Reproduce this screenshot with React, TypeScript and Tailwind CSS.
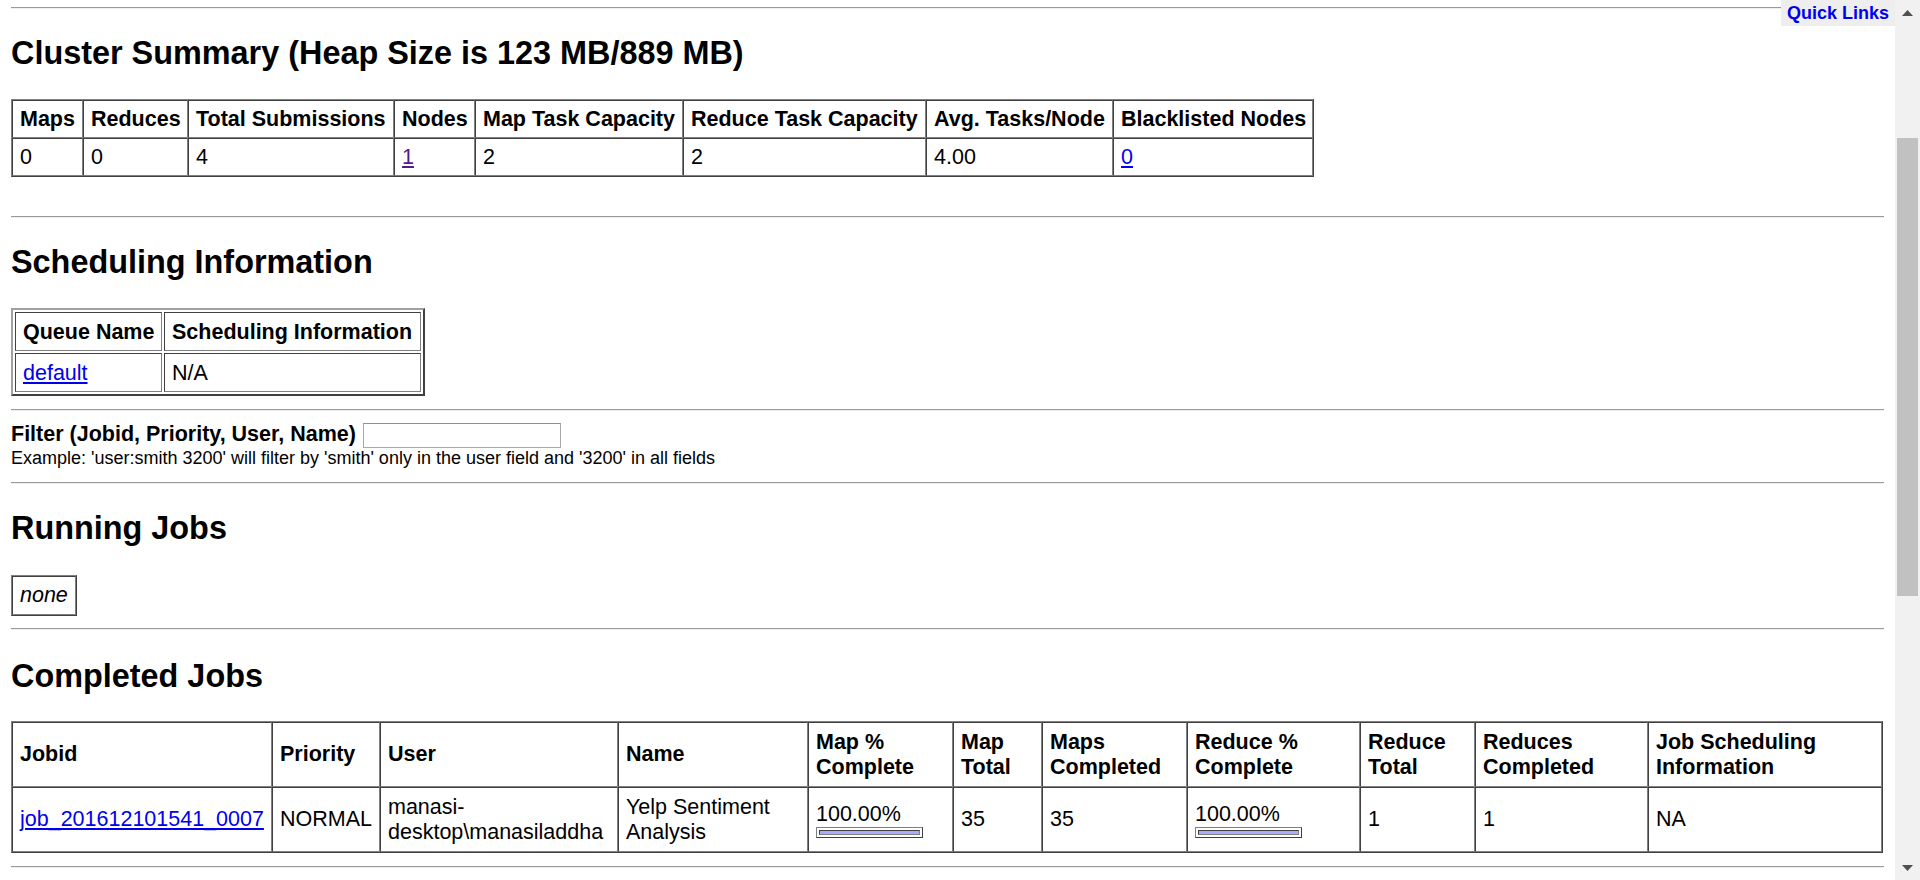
import React from 'react'

const tableOut = 'border border-t-[#808080] border-l-[#808080] border-b-[#404040] border-r-[#404040]'
const cellIn = 'border border-t-[#404040] border-l-[#404040] border-b-[#808080] border-r-[#808080]'

const summary = [
  { label: 'Maps', w: 71, value: '0' },
  { label: 'Reduces', w: 105, value: '0' },
  { label: 'Total Submissions', w: 206, value: '4' },
  { label: 'Nodes', w: 81, value: '1', link: 'visited' },
  { label: 'Map Task Capacity', w: 208, value: '2' },
  { label: 'Reduce Task Capacity', w: 243, value: '2' },
  { label: 'Avg. Tasks/Node', w: 187, value: '4.00' },
  { label: 'Blacklisted Nodes', w: 200, value: '0', link: 'new' },
]

const jobCols = [
  { label: ['Jobid'], w: 260 },
  { label: ['Priority'], w: 108 },
  { label: ['User'], w: 238 },
  { label: ['Name'], w: 190 },
  { label: ['Map %', 'Complete'], w: 145 },
  { label: ['Map', 'Total'], w: 89 },
  { label: ['Maps', 'Completed'], w: 145 },
  { label: ['Reduce %', 'Complete'], w: 173 },
  { label: ['Reduce', 'Total'], w: 115 },
  { label: ['Reduces', 'Completed'], w: 173 },
  { label: ['Job Scheduling', 'Information'], w: 234 },
]

function Rule({ className = '' }: { className?: string }) {
  return <div className={`border-t border-b border-t-[#9a9a9a] border-b-[#eeeeee] ${className}`} />
}

function Heading({ children, className = '' }: { children: React.ReactNode; className?: string }) {
  return <h2 className={`text-[32.4px] font-bold leading-[37px] text-black ${className}`}>{children}</h2>
}

function ProgressBar() {
  return (
    <div className={`h-[11px] w-[107px] bg-white p-[2px] ${tableOut}`}>
      <div className={`h-full w-full bg-[#aaaaff] ${cellIn}`} />
    </div>
  )
}

function Lines({ items }: { items: string[] }) {
  return (
    <>
      {items.map((t, i) => (
        <React.Fragment key={i}>
          {i > 0 && <br />}
          {t}
        </React.Fragment>
      ))}
    </>
  )
}

export default function App() {
  return (
    <div className="flex h-[880px] w-[1920px] overflow-hidden bg-white font-['Liberation_Sans',Arial,sans-serif] text-black">
      <div className="relative h-full w-[1895px] overflow-hidden">
        <div className="px-[11px] pt-[7px]">
          <Rule />

          {/* Cluster summary */}
          <Heading className="mt-[26px]">Cluster Summary (Heap Size is 123 MB/889 MB)</Heading>
          <table className={`mt-[27px] w-[1303px] table-fixed border-separate border-spacing-0 text-[21.5px] leading-[24px] ${tableOut}`}>
            <thead>
              <tr>
                {summary.map((c) => (
                  <th key={c.label} style={{ width: c.w }} className={`px-[7px] py-[6px] text-left font-bold whitespace-nowrap ${cellIn}`}>
                    {c.label}
                  </th>
                ))}
              </tr>
            </thead>
            <tbody>
              <tr>
                {summary.map((c) => (
                  <td key={c.label} className={`px-[7px] py-[6px] text-left ${cellIn}`}>
                    {c.link === 'visited' ? (
                      <a href="#" className="text-[#551a8b] underline">{c.value}</a>
                    ) : c.link === 'new' ? (
                      <a href="#" className="text-[#0000ee] underline">{c.value}</a>
                    ) : (
                      c.value
                    )}
                  </td>
                ))}
              </tr>
            </tbody>
          </table>

          <Rule className="mt-[39px]" />

          {/* Scheduling */}
          <Heading className="mt-[26px]">Scheduling Information</Heading>
          <table className="mt-[27px] w-[414px] table-fixed border-separate border-spacing-[2px] border-2 border-t-[#a0a0a0] border-l-[#a0a0a0] border-b-[#404040] border-r-[#404040] text-[21.5px] leading-[24px]">
            <thead>
              <tr>
                <th style={{ width: 147 }} className={`px-[7px] py-[6.5px] text-left font-bold whitespace-nowrap ${cellIn}`}>Queue Name</th>
                <th style={{ width: 257 }} className={`px-[7px] py-[6.5px] text-left font-bold whitespace-nowrap ${cellIn}`}>Scheduling Information</th>
              </tr>
            </thead>
            <tbody>
              <tr>
                <td className={`px-[7px] py-[6.5px] ${cellIn}`}>
                  <a href="#" className="text-[#0000ee] underline">default</a>
                </td>
                <td className={`px-[7px] py-[6.5px] ${cellIn}`}>N/A</td>
              </tr>
            </tbody>
          </table>

          <Rule className="mt-[13px]" />

          {/* Filter */}
          <div className="mt-[10.5px] flex items-start gap-[7px]">
            <span className="text-[21.5px] font-bold leading-[24px]">Filter (Jobid, Priority, User, Name)</span>
            <input type="text" className="mt-[1px] h-[25.5px] w-[198px] border border-[#a9a9a9] border-t-[#8f8f8f] bg-white" />
          </div>
          <div className="text-[18px] leading-[21px]">
            Example: 'user:smith 3200' will filter by 'smith' only in the user field and '3200' in all fields
          </div>

          <Rule className="mt-[12.7px]" />

          {/* Running */}
          <Heading className="mt-[26px]">Running Jobs</Heading>
          <table className={`mt-[28px] border-separate border-spacing-0 text-[21.5px] leading-[24px] ${tableOut}`}>
            <tbody>
              <tr>
                <td className={`px-[7px] py-[6.5px] italic ${cellIn}`}>none</td>
              </tr>
            </tbody>
          </table>

          <Rule className="mt-[12.7px]" />

          {/* Completed */}
          <Heading className="mt-[27.5px]">Completed Jobs</Heading>
          <table className={`mt-[26.5px] w-[1872px] table-fixed border-separate border-spacing-0 text-[21.5px] leading-[25px] ${tableOut}`}>
            <thead>
              <tr>
                {jobCols.map((c) => (
                  <th key={c.label.join()} style={{ width: c.w }} className={`px-[7px] py-[6.5px] text-left align-middle font-bold whitespace-nowrap ${cellIn}`}>
                    <Lines items={c.label} />
                  </th>
                ))}
              </tr>
            </thead>
            <tbody>
              <tr>
                <td className={`px-[7px] py-[6.5px] align-middle ${cellIn}`}>
                  <a href="#" className="text-[#0000ee] underline">job_201612101541_0007</a>
                </td>
                <td className={`px-[7px] py-[6.5px] align-middle ${cellIn}`}>NORMAL</td>
                <td className={`px-[7px] py-[6.5px] align-middle whitespace-nowrap ${cellIn}`}>
                  <Lines items={['manasi-', 'desktop\\manasiladdha']} />
                </td>
                <td className={`px-[7px] py-[6.5px] align-middle whitespace-nowrap ${cellIn}`}>
                  <Lines items={['Yelp Sentiment', 'Analysis']} />
                </td>
                <td className={`px-[7px] py-[6.5px] align-middle ${cellIn}`}>
                  <div>100.00%</div>
                  <ProgressBar />
                </td>
                <td className={`px-[7px] py-[6.5px] align-middle ${cellIn}`}>35</td>
                <td className={`px-[7px] py-[6.5px] align-middle ${cellIn}`}>35</td>
                <td className={`px-[7px] py-[6.5px] align-middle ${cellIn}`}>
                  <div>100.00%</div>
                  <ProgressBar />
                </td>
                <td className={`px-[7px] py-[6.5px] align-middle ${cellIn}`}>1</td>
                <td className={`px-[7px] py-[6.5px] align-middle ${cellIn}`}>1</td>
                <td className={`px-[7px] py-[6.5px] align-middle ${cellIn}`}>NA</td>
              </tr>
            </tbody>
          </table>

          <Rule className="mt-[12.3px]" />
        </div>

        {/* Quick links */}
        <div className="absolute right-0 top-0 flex h-[26px] items-center bg-[#eeeeee] px-[6px]">
          <a href="#" className="text-[18px] font-bold leading-[20px] text-[#0000ee] no-underline">Quick Links</a>
        </div>
      </div>

      {/* scrollbar */}
      <div className="flex h-full w-[25px] flex-col bg-[#f1f1f1]">
        <div className="flex h-[25px] items-center justify-center">
          <svg width="11" height="6" viewBox="0 0 11 6"><path d="M0 6 L5.5 0 L11 6 Z" fill="#505050" /></svg>
        </div>
        <div className="mx-[2px] mt-[113px] h-[458px] bg-[#c1c1c1]" />
        <div className="flex-1" />
        <div className="flex h-[25px] items-center justify-center">
          <svg width="11" height="6" viewBox="0 0 11 6"><path d="M0 0 L11 0 L5.5 6 Z" fill="#505050" /></svg>
        </div>
      </div>
    </div>
  )
}
